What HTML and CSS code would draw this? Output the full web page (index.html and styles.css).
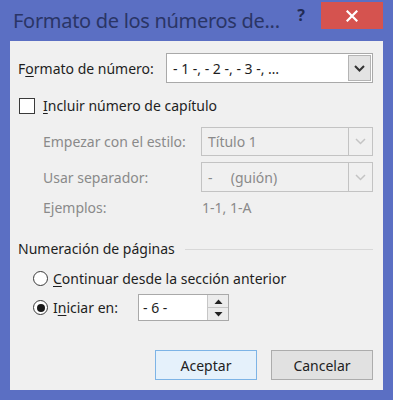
FILE: index.html
```html
<!DOCTYPE html>
<html lang="es">
<head>
<meta charset="utf-8">
<title>Formato de los números de página</title>
<link rel="stylesheet" href="styles.css">
</head>
<body>
<div class="window">
  <div class="titlebar">
    <span class="title">Formato de los números de...</span>
    <span class="help">?</span>
    <span class="close">
      <svg width="12" height="12" viewBox="0 0 12 12"><path d="M1.5 1.5 L10.5 10.5 M10.5 1.5 L1.5 10.5" stroke="#fff" stroke-width="2.2" stroke-linecap="square"/></svg>
    </span>
  </div>
  <div class="client">
    <div class="row-format">
      <span class="lbl">F<u>o</u>rmato de número:</span>
      <div class="combo combo-format">
        <span class="val">- 1 -, - 2 -, - 3 -, …</span>
        <span class="drop"><svg width="11" height="7" viewBox="0 0 11 7"><path d="M1 1 L5.5 5.5 L10 1" fill="none" stroke="#333" stroke-width="2"/></svg></span>
      </div>
    </div>
    <div class="row-check">
      <span class="checkbox"></span>
      <span class="lbl"><u>I</u>ncluir número de capítulo</span>
    </div>
    <div class="sub">
      <span class="dis">Empezar con el estilo:</span>
      <div class="combo combo-dis">
        <span class="val">Título 1</span>
        <span class="drop"><svg width="11" height="7" viewBox="0 0 11 7"><path d="M1 1 L5.5 5.5 L10 1" fill="none" stroke="#c4c4c4" stroke-width="1.5"/></svg></span>
      </div>
      <span class="dis">Usar separador:</span>
      <div class="combo combo-dis">
        <span class="val">-&nbsp;&nbsp;&nbsp;&nbsp;&nbsp;(guión)</span>
        <span class="drop"><svg width="11" height="7" viewBox="0 0 11 7"><path d="M1 1 L5.5 5.5 L10 1" fill="none" stroke="#c4c4c4" stroke-width="1.5"/></svg></span>
      </div>
      <span class="dis ex">Ejemplos:</span>
      <span class="dis ex ex-val">1-1, 1-A</span>
    </div>
    <div class="section">
      <span class="lbl">Numeración de páginas</span>
      <span class="line"></span>
    </div>
    <div class="row-radio r1">
      <span class="radio"></span>
      <span class="lbl"><u>C</u>ontinuar desde la sección anterior</span>
    </div>
    <div class="row-radio r2">
      <span class="radio on"></span>
      <span class="lbl lbl-start">I<u>n</u>iciar en:</span>
      <div class="spin">
        <span class="val">- 6 -</span>
        <span class="arrows">
          <span class="arr"><svg width="9" height="5" viewBox="0 0 9 5"><path d="M0.5 5 L4.5 0.5 L8.5 5 Z" fill="#222"/></svg></span>
          <span class="arr"><svg width="9" height="5" viewBox="0 0 9 5"><path d="M0.5 0 L4.5 4.5 L8.5 0 Z" fill="#222"/></svg></span>
        </span>
      </div>
    </div>
    <div class="buttons">
      <span class="btn btn-ok">Aceptar</span>
      <span class="btn">Cancelar</span>
    </div>
  </div>
</div>
</body>
</html>
```
FILE: styles.css
```css
* { box-sizing: border-box; }
html, body { margin: 0; padding: 0; }
body {
  width: 393px;
  height: 400px;
  overflow: hidden;
  font-family: "Noto Sans", "Open Sans", sans-serif;
  font-size: 14px;
  color: #1e1e1e;
}
.window {
  width: 393px;
  height: 400px;
  background: #5b6fc3;
  padding: 0 10px 10px 10px;
  display: flex;
  flex-direction: column;
}
.titlebar {
  height: 41px;
  display: flex;
  align-items: flex-start;
}
.title {
  margin-left: 3px;
  margin-top: 7px;
  font-size: 20px;
  color: #2a3566;
  letter-spacing: -0.3px;
  white-space: nowrap;
}
.help {
  margin-left: auto;
  margin-top: 4px;
  margin-right: 16px;
  font-weight: bold;
  font-size: 16px;
  color: #222c55;
}
.close {
  width: 62px;
  height: 27px;
  margin-top: 2px;
  background: #d5534f;
  display: flex;
  align-items: center;
  justify-content: center;
}
.close svg { display: block; }
.client {
  flex: 1;
  background: #f0f0f0;
  padding: 0 10px 0 8px;
  display: flex;
  flex-direction: column;
}
u { text-decoration-thickness: 1px; text-underline-offset: 2px; }
.row-format {
  margin-top: 12px;
  height: 30px;
  display: flex;
  align-items: center;
}
.row-format .lbl { width: 148px; }
.combo {
  display: flex;
  align-items: stretch;
  border: 1px solid #a9a9a9;
  background: #fff;
}
.combo-format { width: 207px; height: 30px; }
.combo .val {
  flex: 1;
  display: flex;
  align-items: center;
  padding-left: 6px;
  white-space: nowrap;
}
.combo .drop {
  width: 24px;
  display: flex;
  align-items: center;
  justify-content: center;
  background: #e3e3e3;
  border-left: 1px solid #a9a9a9;
}
.combo-format .drop { margin: 1px; border: 1px solid #b4b4b4; width: 23px; }
.row-check {
  margin-top: 14px;
  height: 17px;
  display: flex;
  align-items: center;
  gap: 8px;
  padding-left: 1px;
}
.checkbox {
  width: 16px;
  height: 16px;
  border: 1px solid #3a3a3a;
  background: #fff;
}
.sub {
  margin-top: 13px;
  padding-left: 25px;
  display: grid;
  grid-template-columns: 158px 172px;
  grid-template-rows: 29px 30px 20px;
  row-gap: 6px;
  align-items: center;
}
.dis { color: #8a8a8a; }
.combo-dis {
  height: 29px;
  background: #f0f0f0;
  border-color: #c3c3c3;
  color: #8a8a8a;
}
.sub .combo-dis + .dis + .combo-dis { height: 30px; }
.combo-dis .drop { background: #f0f0f0; border-left-color: #c3c3c3; }
.ex { align-self: start; margin-top: 0; }
.ex-val { padding-left: 1px; }
.section {
  margin-top: 21px;
  display: flex;
  align-items: center;
  gap: 10px;
}
.section .line {
  flex: 1;
  height: 1px;
  background: #d8d8d8;
  margin-top: 1px;
}
.row-radio {
  display: flex;
  align-items: center;
  padding-left: 15px;
}
.r1 { margin-top: 11px; height: 18px; }
.r2 { margin-top: 7px; height: 27px; }
.radio {
  width: 15px;
  height: 15px;
  border-radius: 50%;
  border: 1px solid #3a3a3a;
  background: #fff;
  margin-right: 5px;
  display: flex;
  align-items: center;
  justify-content: center;
}
.radio.on::after {
  content: "";
  width: 8px;
  height: 8px;
  border-radius: 50%;
  background: #1a1a1a;
}
.lbl-start { width: 85px; }
.spin {
  width: 91px;
  height: 27px;
  border: 1px solid #a9a9a9;
  background: #fff;
  display: flex;
}
.spin .val {
  flex: 1;
  display: flex;
  align-items: center;
  padding-left: 4px;
}
.spin .arrows {
  width: 21px;
  display: flex;
  flex-direction: column;
  border-left: 1px solid #c6c6c6;
  background: #ececec;
}
.spin .arr {
  flex: 1;
  display: flex;
  align-items: center;
  justify-content: center;
}
.spin .arr + .arr { border-top: 1px solid #c6c6c6; }
.buttons {
  margin-top: 29px;
  display: flex;
  justify-content: flex-end;
  gap: 14px;
}
.btn {
  width: 102px;
  height: 30px;
  display: flex;
  align-items: center;
  justify-content: center;
  border: 1px solid #acacac;
  background: #e1e1e1;
  color: #222;
}
.btn-ok {
  background: #e5f1fb;
  border-color: #7db4e6;
}
```
